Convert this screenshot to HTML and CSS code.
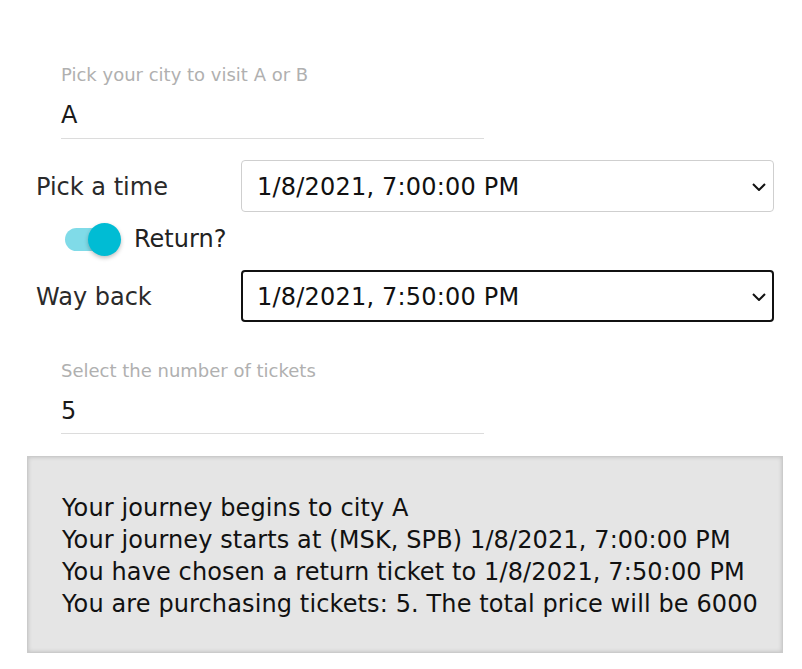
FILE: index.html
```html
<!DOCTYPE html>
<html>
<head>
<meta charset="utf-8">
<link rel="stylesheet" href="styles.css">
</head>
<body>
<div class="page">
  <div class="field field-first">
    <div class="field-label">Pick your city to visit A or B</div>
    <div class="field-value">A</div>
  </div>

  <div class="row row-time">
    <div class="row-label">Pick a time</div>
    <div class="select">
      <span>1/8/2021, 7:00:00 PM</span>
      <svg class="chev" width="14" height="8" viewBox="0 0 14 8"><path d="M1 1 L7 7 L13 1" fill="none" stroke="#111" stroke-width="2"/></svg>
    </div>
  </div>

  <div class="toggle-row">
    <div class="switch">
      <div class="track"></div>
      <div class="thumb"></div>
    </div>
    <span class="toggle-label">Return?</span>
  </div>

  <div class="row">
    <div class="row-label">Way back</div>
    <div class="select select-focus">
      <span>1/8/2021, 7:50:00 PM</span>
      <svg class="chev" width="14" height="8" viewBox="0 0 14 8"><path d="M1 1 L7 7 L13 1" fill="none" stroke="#111" stroke-width="2"/></svg>
    </div>
  </div>

  <div class="field field-second">
    <div class="field-label">Select the number of tickets</div>
    <div class="field-value">5</div>
  </div>

  <div class="summary">
    <div>Your journey begins to city A</div>
    <div>Your journey starts at (MSK, SPB) 1/8/2021, 7:00:00 PM</div>
    <div>You have chosen a return ticket to 1/8/2021, 7:50:00 PM</div>
    <div>You are purchasing tickets: 5. The total price will be 6000</div>
  </div>
</div>
</body>
</html>
```

FILE: styles.css
```css
html, body {
  margin: 0;
  padding: 0;
  background: #fff;
}
body {
  font-family: "DejaVu Sans", "Inter", sans-serif;
  color: #222;
}
.page {
  padding: 64px 0 0 27px;
  width: 756px;
}
.field {
  margin-left: 34px;
  width: 423px;
}
.field-label {
  font-size: 18px;
  line-height: 22px;
  color: #b0b0b0;
}
.field-value {
  font-size: 24px;
  line-height: 28px;
  padding: 15px 0 9px;
  border-bottom: 1px solid #dcdcdc;
  color: #1a1a1a;
}
.row {
  display: flex;
  align-items: center;
  padding-left: 9px;
}
.row-time {
  margin-top: 21px;
}
.row-label {
  width: 205px;
  padding-top: 2px;
  font-size: 24px;
  color: #2a2a2a;
}
.select {
  box-sizing: border-box;
  width: 533px;
  height: 52px;
  border: 1px solid #cfcfcf;
  border-radius: 4px;
  display: flex;
  align-items: center;
  justify-content: space-between;
  padding: 2px 7px 0 15px;
  font-size: 24px;
  letter-spacing: 0.2px;
  color: #111;
}
.select-focus {
  border: 2px solid #111;
  padding-left: 14px;
  padding-right: 6px;
}
.chev {
  display: block;
}
.toggle-row {
  display: flex;
  align-items: center;
  height: 34px;
  margin: 10px 0 14px;
  padding-left: 38px;
}
.switch {
  position: relative;
  width: 56px;
  height: 34px;
}
.track {
  position: absolute;
  left: 0;
  top: 6px;
  width: 50px;
  height: 23px;
  border-radius: 12px;
  background: #80dbe8;
}
.thumb {
  position: absolute;
  left: 23px;
  top: 1px;
  width: 33px;
  height: 33px;
  border-radius: 50%;
  background: #00bcd4;
  box-shadow: 0 2px 4px rgba(0,0,0,0.25);
}
.toggle-label {
  margin-left: 13px;
  font-size: 24px;
  color: #222;
}
.field-second {
  margin-top: 38px;
}
.field-second .field-value {
  padding-bottom: 8px;
}
.summary {
  margin-top: 22px;
  box-sizing: border-box;
  width: 756px;
  height: 197px;
  background: #e5e5e5;
  border: 1px solid #cbcbcb;
  box-shadow: inset 0 0 4px rgba(0,0,0,0.18);
  padding: 35px 0 0 34px;
  font-size: 24px;
  letter-spacing: 0.12px;
  line-height: 32px;
  color: #111;
}
```
